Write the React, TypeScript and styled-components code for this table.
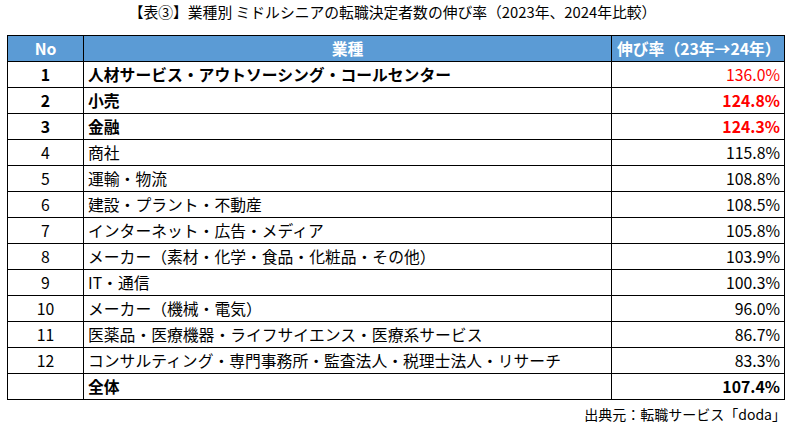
import React from "react";
import styled, { createGlobalStyle } from "styled-components";

const Global = createGlobalStyle`
  html, body { margin: 0; padding: 0; background: #ffffff; }
  body { font-family: "Noto Sans CJK JP", "Noto Sans", sans-serif; color: #000; }
`;

const Page = styled.div`
  width: 796px;
  height: 433px;
  padding: 0 13px 0 7px;
  box-sizing: border-box;
  display: flex;
  flex-direction: column;
`;

const Title = styled.div`
  height: 35px;
  display: flex;
  align-items: center;
  justify-content: center;
  font-size: 14.8px;
  line-height: 1;
  padding-bottom: 11px;
  box-sizing: border-box;
  padding-right: 5px;
  letter-spacing: 0;
`;

const Table = styled.table`
  width: 777px;
  border-collapse: collapse;
  table-layout: fixed;
  font-size: 15.8px;
`;

const HeadCell = styled.th<{ $align?: string }>`
  height: 26px;
  padding: 0 5px;
  box-sizing: border-box;
  background: #5b9bd5;
  color: #ffffff;
  border: 1px solid #000;
  font-weight: 700;
  text-align: ${(p) => p.$align || "center"};
  line-height: 1;
  white-space: nowrap;
`;

const Row = styled.tr`
  height: 26px;
`;

const NoCell = styled.td<{ $bold?: boolean }>`
  border: 1px solid #000;
  padding: 0;
  text-align: center;
  font-weight: ${(p) => (p.$bold ? 700 : 400)};
  line-height: 1;
`;

const NameCell = styled.td<{ $bold?: boolean }>`
  border: 1px solid #000;
  padding: 0 4px;
  text-align: left;
  font-weight: ${(p) => (p.$bold ? 700 : 400)};
  white-space: nowrap;
  line-height: 1;
`;

const RateCell = styled.td<{ $bold?: boolean; $red?: boolean }>`
  border: 1px solid #000;
  padding: 0 4px;
  text-align: right;
  font-weight: ${(p) => (p.$bold ? 700 : 400)};
  color: ${(p) => (p.$red ? "#ff0000" : "#000")};
  line-height: 1;
`;

const Source = styled.div`
  width: 779px;
  text-align: right;
  font-size: 14px;
  line-height: 1;
  padding-top: 7px;
  box-sizing: border-box;
`;

type R = { no: string; name: string; rate: string; bold?: boolean; red?: boolean; rateBold?: boolean };

const rows: R[] = [
  { no: "1", name: "人材サービス・アウトソーシング・コールセンター", rate: "136.0%", bold: true, red: true, rateBold: false },
  { no: "2", name: "小売", rate: "124.8%", bold: true, red: true, rateBold: true },
  { no: "3", name: "金融", rate: "124.3%", bold: true, red: true, rateBold: true },
  { no: "4", name: "商社", rate: "115.8%" },
  { no: "5", name: "運輸・物流", rate: "108.8%" },
  { no: "6", name: "建設・プラント・不動産", rate: "108.5%" },
  { no: "7", name: "インターネット・広告・メディア", rate: "105.8%" },
  { no: "8", name: "メーカー（素材・化学・食品・化粧品・その他）", rate: "103.9%" },
  { no: "9", name: "IT・通信", rate: "100.3%" },
  { no: "10", name: "メーカー（機械・電気）", rate: "96.0%" },
  { no: "11", name: "医薬品・医療機器・ライフサイエンス・医療系サービス", rate: "86.7%" },
  { no: "12", name: "コンサルティング・専門事務所・監査法人・税理士法人・リサーチ", rate: "83.3%" },
];

export default function App() {
  return (
    <>
      <Global />
      <Page>
        <Title>【表③】業種別 ミドルシニアの転職決定者数の伸び率（2023年、2024年比較）</Title>
        <Table>
          <colgroup>
            <col style={{ width: 76 }} />
            <col style={{ width: 528 }} />
            <col style={{ width: 173 }} />
          </colgroup>
          <thead>
            <tr>
              <HeadCell>No</HeadCell>
              <HeadCell>業種</HeadCell>
              <HeadCell $align="left">伸び率（23年→24年）</HeadCell>
            </tr>
          </thead>
          <tbody>
            {rows.map((r) => (
              <Row key={r.no}>
                <NoCell $bold={r.bold}>{r.no}</NoCell>
                <NameCell $bold={r.bold}>{r.name}</NameCell>
                <RateCell $bold={r.rateBold} $red={r.red}>{r.rate}</RateCell>
              </Row>
            ))}
            <Row>
              <NoCell />
              <NameCell $bold>全体</NameCell>
              <RateCell $bold>107.4%</RateCell>
            </Row>
          </tbody>
        </Table>
        <Source>出典元：転職サービス「doda」</Source>
      </Page>
    </>
  );
}
